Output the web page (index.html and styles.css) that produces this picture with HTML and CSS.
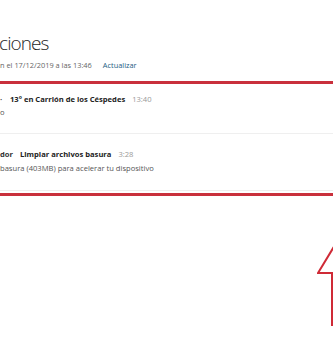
FILE: index.html
```html
<!DOCTYPE html>
<html>
<head>
<meta charset="utf-8">
<link rel="stylesheet" href="styles.css">
</head>
<body>
<div class="page">
  <h1 class="title">ciones</h1>
  <div class="sub"><span class="updated">n el 17/12/2019 a las 13:46</span><span class="link">Actualizar</span></div>
  <div class="box">
    <div class="row">
      <div class="line1"><span class="app">·</span><span class="head">13° en Carrión de los Céspedes</span><span class="time">13:40</span></div>
      <div class="line2">o</div>
    </div>
    <div class="row row2">
      <div class="line1"><span class="app">dor</span><span class="head">Limpiar archivos basura</span><span class="time">3:28</span></div>
      <div class="line2">basura (403MB) para acelerar tu dispositivo</div>
    </div>
  </div>
</div>
<svg class="arrow" width="16" height="100" viewBox="0 0 16 100">
  <polyline points="15,82 15,29 1,29 18,1" fill="none" stroke="#cf2a36" stroke-width="2"/>
</svg>
</body>
</html>
```
FILE: styles.css
```css
html, body { margin: 0; padding: 0; background: #fff; }
body { width: 333px; height: 360px; overflow: hidden; position: relative; font-family: "Open Sans", "Noto Sans", sans-serif; }
.page { padding-top: 31px; }
.title { margin: 0; font-size: 19px; font-weight: 300; line-height: 24px; color: #1f1f1f; letter-spacing: -0.9px; margin-left: -1px; }
.sub { margin-top: 5px; font-size: 7.4px; line-height: 10px; color: #666; display: flex; gap: 11px; }
.link { color: #1d5d84; }
.box { margin-top: 11px; border-top: 3px solid #c9303c; border-bottom: 3px solid #c9303c; padding-bottom: 2px; }
.row { height: 50px; border-bottom: 1px solid #efefef; box-sizing: border-box; padding-top: 10px; }
.row2 { height: 57px; padding-top: 15px; }
.line1 { display: flex; font-size: 7.6px; line-height: 10px; }
.app { font-weight: 700; color: #333; width: 10px; }
.row2 .app { width: 20px; }
.head { font-weight: 700; color: #222; }
.time { color: #999; margin-left: 7px; }
.line2 { font-size: 7.6px; line-height: 10px; color: #555; margin-top: 3px; }
.row2 .line2 { margin-top: 4px; }
.arrow { position: absolute; left: 317px; top: 244px; }
```
